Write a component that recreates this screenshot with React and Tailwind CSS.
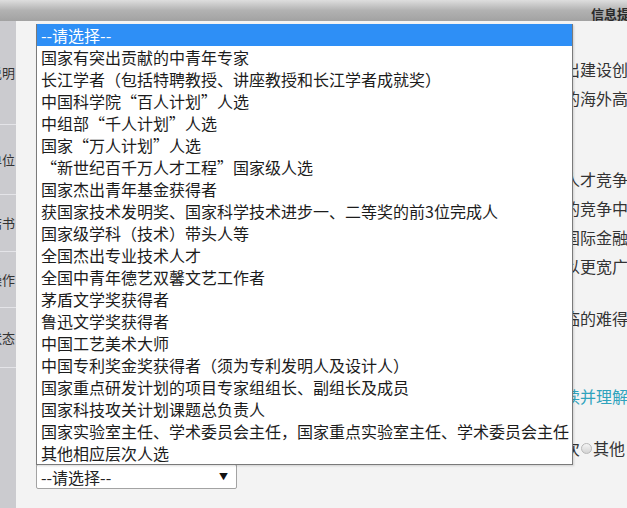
import React from "react";

const items = [
  "国家有突出贡献的中青年专家",
  "长江学者（包括特聘教授、讲座教授和长江学者成就奖）",
  "中国科学院“百人计划”人选",
  "中组部“千人计划”人选",
  "国家“万人计划”人选",
  "“新世纪百千万人才工程”国家级人选",
  "国家杰出青年基金获得者",
  "获国家技术发明奖、国家科学技术进步一、二等奖的前3位完成人",
  "国家级学科（技术）带头人等",
  "全国杰出专业技术人才",
  "全国中青年德艺双馨文艺工作者",
  "茅盾文学奖获得者",
  "鲁迅文学奖获得者",
  "中国工艺美术大师",
  "中国专利奖金奖获得者（须为专利发明人及设计人）",
  "国家重点研发计划的项目专家组组长、副组长及成员",
  "国家科技攻关计划课题总负责人",
  "国家实验室主任、学术委员会主任，国家重点实验室主任、学术委员会主任",
  "其他相应层次人选",
];

const labels = [
  { t: "说明", h: "h-[104px]" },
  { t: "单位", h: "h-[70px]" },
  { t: "结书", h: "h-[57px]" },
  { t: "操作", h: "h-[56px]" },
  { t: "状态", h: "h-[60px]" },
];

export default function App() {
  return (
    <div className="relative w-[627px] h-[508px] overflow-hidden bg-[#f3f3f3] text-[#222] font-['Noto_Sans_CJK_SC',sans-serif]">
      <header className="h-[21px] bg-gradient-to-b from-[#dedede] via-[#b2b2b2] to-[#a2a2a2] pl-[591px] whitespace-nowrap overflow-hidden">
        <span className="text-[13px] leading-[14px] font-bold text-[#2a2a2a]">信息提示</span>
      </header>
      <div className="flex">
        <aside className="w-[16px] shrink-0 h-[487px] bg-[#cbcbcf] flex flex-col overflow-hidden">
          {labels.map((l) => (
            <div
              key={l.t}
              className={`${l.h} shrink-0 flex items-center justify-end pr-[1px] border-b border-[#e4e4e8] text-[13px] text-[#333] whitespace-nowrap overflow-hidden`}
            >
              <span>{l.t}</span>
            </div>
          ))}
        </aside>
        <main className="flex-1 min-w-0 flex flex-col overflow-hidden">
          <div className="pl-[548px] text-[16px] leading-[29px] text-[#333] whitespace-nowrap">
            <div className="mt-[34px]">
              <div>出建设创新</div>
              <div>的海外高层</div>
            </div>
            <div className="mt-[52px]">
              <div>人才竞争</div>
              <div>的竞争中</div>
              <div>国际金融</div>
              <div>以更宽广</div>
            </div>
            <div className="mt-[23px]">
              <div>临的难得</div>
            </div>
            <div className="mt-[49px] text-[#2fa3bd]">
              <div>读并理解</div>
            </div>
            <div className="mt-[23px] flex items-center">
              <span>次</span>
              <span className="shrink-0 mx-[1px] w-[11px] h-[11px] rounded-full border border-[#b8b8b8] bg-gradient-to-b from-[#f4f4f4] to-[#d4d4d4]"></span>
              <span>其他</span>
            </div>
          </div>
          <div className="ml-[20px] mt-[1px] w-[201px] h-[25px] shrink-0 bg-white border border-[#a3a3a3] rounded-[2px] flex items-center justify-between pl-[4px] pr-[8px]">
            <span className="text-[16px] leading-[20px] text-[#222]">--请选择--</span>
            <span className="text-[9px] text-[#111]">▼</span>
          </div>
        </main>
      </div>

      <div className="absolute left-[36px] top-[24px] w-[537px] bg-white border-l border-r border-b border-[#7a7a7a] shadow-[1px_1px_2px_rgba(0,0,0,0.15)]">
        <div className="h-[22px] bg-[#2e8ff6] text-white text-[16px] leading-[22px] pl-[4px] whitespace-nowrap">
          --请选择--
        </div>
        {items.map((it) => (
          <div
            key={it}
            className="h-[22px] text-[16px] leading-[22px] pl-[4px] whitespace-nowrap overflow-hidden text-[#1c1c1c]"
          >
            {it}
          </div>
        ))}
      </div>
    </div>
  );
}
